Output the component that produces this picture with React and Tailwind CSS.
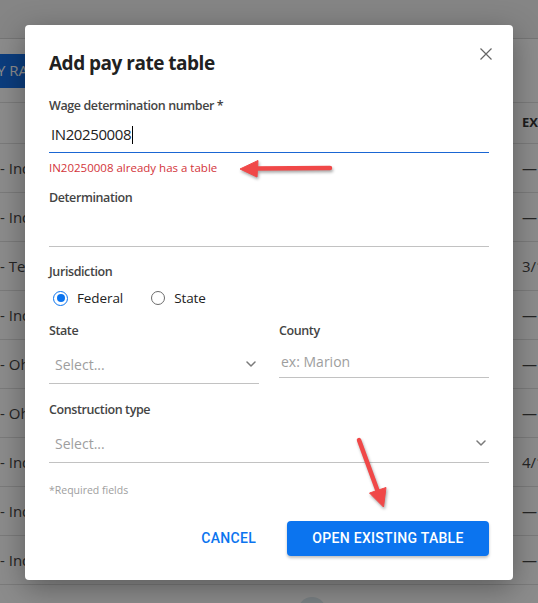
import React from "react";

const rows = [
  ["- Indiana", "—"],
  ["- Indiana", "—"],
  ["- Texas", "3/14/2025"],
  ["- Indiana", "—"],
  ["- Ohio", "—"],
  ["- Ohio", "—"],
  ["- Indiana", "4/11/2025"],
  ["- Indiana", "—"],
  ["- Indiana", "—"],
];

const labelCls = "text-[12.5px] font-semibold leading-[18px] tracking-[-0.4px] text-[#444]";

const Chevron = () => (
  <svg width="10" height="6" viewBox="0 0 10 6" fill="none">
    <path d="M1 1l4 4 4-4" stroke="#7a7a7a" strokeWidth="1.5" strokeLinecap="round" strokeLinejoin="round" />
  </svg>
);

const Radio = ({ checked, label }) => (
  <label className="flex items-center gap-[9px]">
    {checked ? (
      <span className="flex h-[15px] w-[15px] items-center justify-center rounded-full border-[1.5px] border-[#0b74ef]">
        <span className="h-[8px] w-[8px] rounded-full bg-[#0b74ef]"></span>
      </span>
    ) : (
      <span className="h-[14px] w-[14px] rounded-full border border-[#6b6b6b]"></span>
    )}
    <span className="text-[13.5px] tracking-[-0.1px] text-[#222]">{label}</span>
  </label>
);

export default function App() {
  return (
    <div className="relative h-[603px] w-[538px] overflow-hidden bg-white font-['Open_Sans',sans-serif]">
      {/* page behind the dialog */}
      <div className="h-[39px] border-b border-[#d6d6d6] bg-[#f2f2f2]"></div>
      <div className="flex h-[64px] items-center border-b border-[#e0e0e0]">
        <div className="ml-[-3px] flex h-[34px] items-center whitespace-nowrap bg-[#1470e6] pr-4 text-[15px] text-white">
          Y RATE TABLE
        </div>
      </div>
      <div className="grid h-[41px] grid-cols-[522px_1fr] items-center border-b border-[#e0e0e0] text-[13px] font-bold text-[#333]">
        <span></span>
        <span className="whitespace-nowrap">EXPIRES</span>
      </div>
      {rows.map(([name, date], i) => (
        <div
          key={i}
          className="grid h-[49px] grid-cols-[522px_1fr] items-center border-b border-[#e0e0e0] text-[15px] text-[#444]">
          <span className="whitespace-nowrap">{name}</span>
          <span className="whitespace-nowrap">{date}</span>
        </div>
      ))}
      <div className="ml-[298px] mt-3 h-7 w-7 rounded-full bg-[#dde9ee]"></div>

      {/* dialog */}
      <div className="absolute inset-0 flex items-start justify-center bg-black/45 pt-[25px]">
        <div className="relative w-[488px] rounded bg-white px-6 pb-6 pt-6 shadow-[0_8px_30px_rgba(0,0,0,0.35)]">
          <button className="absolute right-[21px] top-[23px]">
            <svg width="12" height="12" viewBox="0 0 12 12" fill="none">
              <path d="M0.5 0.5l11 11M11.5 0.5l-11 11" stroke="#666" strokeWidth="1.2" />
            </svg>
          </button>

          <h2 className="h-7 text-[19px] font-bold leading-7 tracking-[-0.5px] text-[#212121]">Add pay rate table</h2>

          <div className={`mt-5 ${labelCls}`}>Wage determination number *</div>
          <div className="flex h-[38px] items-center border-b-[1.5px] border-[#1a66d3] pl-[2px] pt-[2px] text-[15px] tracking-[-0.4px] text-[#222]">
            IN20250008
            <span className="ml-[1px] h-[18px] w-px bg-black"></span>
          </div>
          <div className="mt-[7px] text-[11.5px] leading-4 text-[#d3343a]">IN20250008 already has a table</div>

          <div className={`mt-[13px] ${labelCls}`}>Determination</div>
          <div className="h-[40px] border-b border-[#c2c2c2]"></div>

          <div className={`mt-4 ${labelCls}`}>Jurisdiction</div>
          <div className="ml-[4px] mt-[7px] flex h-5 items-center gap-[28px]">
            <Radio checked label="Federal" />
            <Radio label="State" />
          </div>

          <div className="mt-[14px] grid grid-cols-2 gap-5">
            <div>
              <div className={labelCls}>State</div>
              <div className="flex h-[44px] items-center justify-between border-b border-[#c2c2c2] pl-[6px] pr-[3px] pt-[5px]">
                <span className="text-[14px] text-[#9e9e9e]">Select...</span>
                <Chevron />
              </div>
            </div>
            <div>
              <div className={labelCls}>County</div>
              <div className="flex h-[38px] items-center border-b border-[#c2c2c2] pl-[2px] pt-[5px]">
                <span className="text-[14px] text-[#9e9e9e]">ex: Marion</span>
              </div>
            </div>
          </div>

          <div className={`mt-[17px] ${labelCls}`}>Construction type</div>
          <div className="flex h-[44px] items-center justify-between border-b border-[#c2c2c2] pl-[6px] pr-[3px] pt-[5px]">
            <span className="text-[14px] text-[#9e9e9e]">Select...</span>
            <Chevron />
          </div>

          <div className="mt-5 text-[10.5px] leading-[14px] text-[#9e9e9e]">*Required fields</div>

          <div className="mt-6 flex items-center justify-end font-['Roboto',sans-serif]">
            <button className="mr-[31px] text-[14px] font-medium tracking-[0.3px] text-[#0b74ef]">CANCEL</button>
            <button className="h-[35px] w-[202px] rounded bg-[#0b74ef] text-[14px] font-medium tracking-[0.3px] text-white shadow-[0_2px_3px_rgba(0,0,0,0.25)]">
              OPEN EXISTING TABLE
            </button>
          </div>
        </div>
      </div>

      {/* annotation arrows */}
      <svg className="pointer-events-none absolute inset-0" width="538" height="603" viewBox="0 0 538 603">
        <g fill="#f04848" stroke="#f04848" style={{ filter: "drop-shadow(1px 2px 1.5px rgba(0,0,0,0.35))" }}>
          <line x1="330" y1="168" x2="255" y2="168.5" strokeWidth="4.5" strokeLinecap="round" />
          <polygon points="240,169 258,160.5 257,177" strokeWidth="1" strokeLinejoin="round" />
          <line x1="359" y1="440" x2="378" y2="492" strokeWidth="4.5" strokeLinecap="round" />
          <polygon points="383.5,507 386,487.5 369.5,493" strokeWidth="1" strokeLinejoin="round" />
        </g>
      </svg>
    </div>
  );
}
